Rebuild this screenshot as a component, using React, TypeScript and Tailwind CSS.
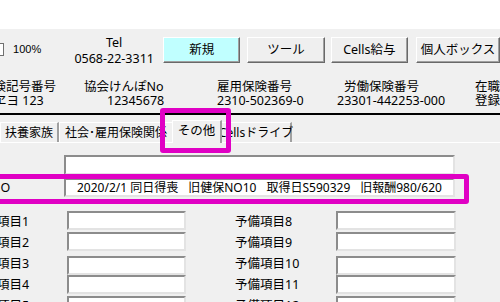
import React from "react";

const font = "font-['Noto_Sans','Noto_Sans_CJK_JP',sans-serif]";

const btnCls =
  "h-[26px] w-[84px] flex items-center justify-center border border-t-white border-l-white border-r-[#696969] border-b-[#696969] shadow-[inset_-1px_-1px_0_#a0a0a0] text-[12.5px]";

const inputCls =
  "h-[19px] bg-white border-2 border-t-[#8c8c8c] border-l-[#8c8c8c] border-r-[#e3e3e3] border-b-[#e3e3e3]";

const rows = [
  { left: "予備項目1", right: "予備項目8", mt: "mt-0" },
  { left: "予備項目2", right: "予備項目9", mt: "mt-0" },
  { left: "予備項目3", right: "予備項目10", mt: "mt-[3px]" },
  { left: "予備項目4", right: "予備項目11", mt: "mt-[1px]" },
  { left: "予備項目5", right: "予備項目12", mt: "mt-[1px]" },
];

function App() {
  return (
    <div className={`w-[500px] h-[302px] overflow-hidden relative bg-[#f0f0f0] text-black text-[12.5px] ${font}`}>
      <div className="h-[29px] bg-white" />

      {/* toolbar */}
      <div className="flex h-[42px] items-start">
        <div className="ml-[-8px] mt-[14px] w-[13px] h-[13px] bg-white border border-[#707070]" />
        <div className="ml-[9px] mt-[13px] text-[11px] leading-[14px] font-['Liberation_Sans',sans-serif]">100%</div>
        <div className="ml-[27px] mt-[6px] w-[100px] text-center leading-[16px]">
          <div>Tel</div>
          <div>0568-22-3311</div>
        </div>
        <div className={`${btnCls} ml-[3px] mt-[8px] bg-[#c0ffff]`}>新規</div>
        <div className={`${btnCls} ml-[7px] mt-[8px] bg-[#efefef]`}>ツール</div>
        <div className={`${btnCls} ml-[6px] mt-[8px] bg-[#efefef]`}>Cells給与</div>
        <div className={`${btnCls} ml-[8px] mt-[8px] bg-[#efefef] shrink-0`}>個人ボックス</div>
      </div>

      {/* info row */}
      <div className="flex h-[42px] pt-[9px] leading-[14px] whitespace-nowrap">
        <div className="ml-[-19px] w-[103px] shrink-0">
          <div>保険記号番号</div>
          <div className="pl-[13px]">ヱヨ 123</div>
        </div>
        <div className="w-[133px] shrink-0">
          <div>協会けんぽNo</div>
          <div className="pl-[23px]">12345678</div>
        </div>
        <div className="w-[120px] shrink-0">
          <div>雇用保険番号</div>
          <div>2310-502369-0</div>
        </div>
        <div className="w-[138px] shrink-0">
          <div className="pl-[7px]">労働保険番号</div>
          <div>23301-442253-000</div>
        </div>
        <div className="shrink-0">
          <div>在職</div>
          <div>登録</div>
        </div>
      </div>

      <div className="h-[2px] bg-black" />

      {/* tabs */}
      <div className="flex items-end h-[27px] whitespace-nowrap text-[12px]">
        <div className="w-[59px] h-[20px] flex items-center justify-center border-l border-t border-white border-r-2 border-r-[#a0a0a0]">
          扶養家族
        </div>
        <div className="w-[115px] h-[20px] flex items-center justify-center border-l border-t border-white border-r-2 border-r-[#a0a0a0]">
          社会･雇用保険関係
        </div>
        <div className="relative z-10 ml-[-2px] w-[50px] h-[23px] mb-[-1px] pb-[1px] flex items-center justify-center bg-[#f0f0f0] border-l border-t border-white border-r-2 border-r-[#a0a0a0] text-[12.5px]">
          その他
        </div>
        <div className="w-[70px] h-[20px] flex items-center justify-center border-t border-white border-r-2 border-r-[#a0a0a0]">
          Cellsドライブ
        </div>
      </div>
      <div className="h-[1px] bg-white" />

      {/* panel */}
      <div className={`ml-[64px] mt-[12px] w-[391px] h-[20px] ${inputCls}`} />
      <div className="flex mt-[3px] h-[19px]">
        <div className="ml-[-9px] w-[73px] shrink-0 leading-[19px]">NO</div>
        <div className={`w-[391px] ${inputCls} pl-[11px] leading-[15px] whitespace-nowrap flex text-[12px]`}>
          <span>2020/2/1 同日得喪</span>
          <span className="ml-[10px]">旧健保NO10</span>
          <span className="ml-[10px]">取得日S590329</span>
          <span className="ml-[10px]">旧報酬980/620</span>
        </div>
      </div>

      <div className="mt-[14px]">
        {rows.map((r) => (
          <div key={r.left} className="flex h-[21px] items-start whitespace-nowrap">
            <div className="ml-[-28px] w-[95px] shrink-0 leading-[21px]">{r.left}</div>
            <div className={`w-[119px] shrink-0 ${r.mt} ${inputCls}`} />
            <div className="ml-[49px] w-[101px] shrink-0 leading-[21px]">{r.right}</div>
            <div className={`w-[120px] shrink-0 ${r.mt} ${inputCls}`} />
          </div>
        ))}
      </div>

      {/* annotation frames */}
      <div className="absolute left-[160px] top-[108px] w-[71px] h-[45px] border-[5px] border-[#e000c4] rounded-[3px]" />
      <div className="absolute left-[-6px] top-[174px] w-[475px] h-[30px] border-[5px] border-[#e000c4] rounded-[3px]" />
    </div>
  );
}

export default App;
